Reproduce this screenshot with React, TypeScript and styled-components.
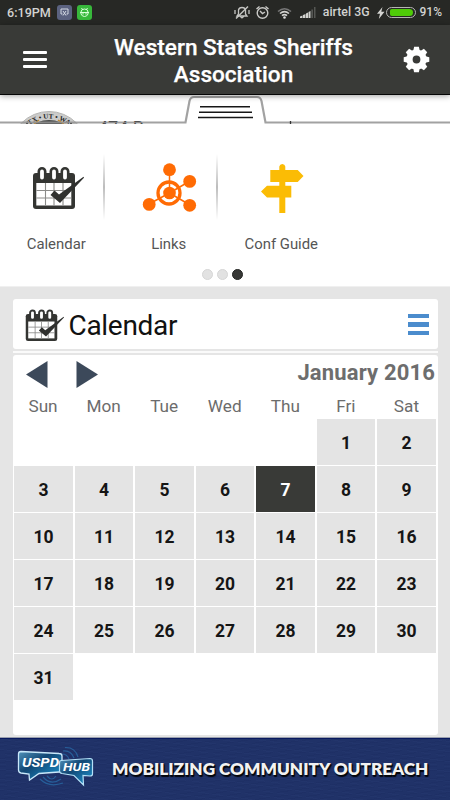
import React from "react";
import styled, { createGlobalStyle } from "styled-components";

const Global = createGlobalStyle`
  * { box-sizing: border-box; }
  body { margin: 0; background: #e5e5e5; font-family: Roboto, "Liberation Sans", sans-serif; }
`;

const Screen = styled.div`
  width: 450px;
  height: 800px;
  display: flex;
  flex-direction: column;
  overflow: hidden;
  background: #e5e5e5;
`;

const StatusBar = styled.div`
  height: 25px;
  flex: none;
  display: flex;
  align-items: center;
  padding: 0 8px 0 7px;
  background: #272825;
  color: #d2d2d0;
`;
const StatusText = styled.span<{ $size?: number; $left?: number }>`
  font-size: ${(p) => p.$size ?? 12}px;
  font-weight: 500;
  line-height: 25px;
  margin-left: ${(p) => p.$left ?? 0}px;
  white-space: nowrap;
`;
const Chip = styled.span<{ $color: string; $left: number }>`
  width: 15px;
  height: 15px;
  border-radius: 3px;
  margin-left: ${(p) => p.$left}px;
  background: ${(p) => p.$color};
  display: flex;
  align-items: center;
  justify-content: center;
`;
const StatusIcon = styled.svg<{ $left?: number }>`
  flex: none;
  margin-left: ${(p) => p.$left ?? 0}px;
`;
const Spacer = styled.div`
  flex: 1;
`;
const Battery = styled.span`
  width: 30px;
  height: 11px;
  margin-left: 1px;
  padding: 1px 2px 1px 3px;
  border: 1px solid #b5b5b2;
  border-radius: 6px;
  display: flex;
`;
const Charge = styled.span`
  width: 25px;
  height: 7px;
  border-radius: 2px 4px 4px 2px;
  background: #4fcb08;
`;

const Header = styled.header`
  height: 70px;
  flex: none;
  position: relative;
  z-index: 2;
  display: flex;
  align-items: center;
  padding: 0 19px 0 23px;
  background: #393a37;
  border-bottom: 1px solid #050505;
  box-shadow: 0 1px 6px rgba(0, 0, 0, 0.38);
`;
const Title = styled.h1`
  margin: 0 auto 0 46.5px;
  padding-top: 4px;
  width: 280px;
  color: #fff;
  font-size: 22.6px;
  font-weight: 500;
  line-height: 26.5px;
  text-align: center;
  -webkit-text-stroke: 0.25px #fff;
`;
const MenuButton = styled.button`
  width: 24px;
  height: 17px;
  padding: 0;
  border: 0;
  background: none;
  display: flex;
  flex-direction: column;
  justify-content: space-between;
`;
const MenuLine = styled.span`
  height: 3px;
  width: 24px;
  border-radius: 1px;
  background: #fff;
`;

const Strip = styled.div`
  height: 29px;
  flex: none;
  position: relative;
  display: flex;
  align-items: flex-start;
  overflow: hidden;
  background: #fff;
  padding-left: 9px;
`;
const Address = styled.span`
  margin: 21px 0 0 9px;
  font-size: 18px;
  line-height: 24px;
  color: #222;
  white-space: nowrap;
`;
const Handle = styled.svg`
  position: absolute;
  left: 0;
  top: 0;
`;

const Drawer = styled.nav`
  height: 163px;
  flex: none;
  background: #fff;
  border-bottom: 1px solid #f0f0f0;
`;
const Shortcuts = styled.div`
  display: grid;
  grid-template-columns: repeat(4, 112.5px);
  height: 143px;
`;
const Shortcut = styled.div<{ $ruled?: boolean }>`
  display: flex;
  flex-direction: column;
  align-items: center;
  padding-top: 37px;
  color: #555;
  font-size: 14.9px;
  line-height: 20px;
  white-space: nowrap;
  background: ${(p) =>
    p.$ruled
      ? "linear-gradient(#fff, #bdbdbd 50%, #fff) 103px 30px / 2px 66px no-repeat"
      : "none"};
`;
const ShortcutIcon = styled.svg`
  width: 60px;
  height: 54px;
  margin-bottom: 19px;
  flex: none;
`;
const Dots = styled.div`
  display: flex;
  justify-content: center;
  gap: 4px;
  padding: 2px 6px 0 0;
`;
const Dot = styled.span<{ $active?: boolean }>`
  width: 11px;
  height: 11px;
  border-radius: 50%;
  background: ${(p) => (p.$active ? "#373836" : "#e2e2e2")};
  border: 1px solid ${(p) => (p.$active ? "#252624" : "#d6d6d6")};
`;

const Content = styled.main`
  height: 450px;
  flex: none;
  padding: 12px 12.5px 0;
`;
const Heading = styled.section`
  height: 50px;
  display: flex;
  align-items: center;
  padding: 0 8.5px 0 9px;
  background: #fff;
  border-radius: 3px;
`;
const HeadingText = styled.h2`
  margin: 4px 0 0 2px;
  flex: 1;
  font-size: 28px;
  font-weight: 400;
  line-height: 32px;
  letter-spacing: -0.3px;
  color: #111;
`;
const HeadingIcon = styled.svg`
  width: 45px;
  height: 40px;
  margin-top: 1px;
  flex: none;
`;
const ListButton = styled.button`
  width: 21px;
  height: 21px;
  margin-top: 1px;
  padding: 0;
  border: 0;
  background: none;
  display: flex;
  flex-direction: column;
  justify-content: space-between;
`;
const ListLine = styled.span`
  width: 21px;
  height: 4.4px;
  background: #4b8ccd;
`;
const Rule = styled.div`
  height: 2px;
  margin: 2px 0;
  background: #fafafa;
`;
const Month = styled.section`
  height: 380px;
  border-radius: 3px;
  background: #fff;
  padding: 0 1.5px;
`;
const MonthBar = styled.div`
  height: 37px;
  display: flex;
  align-items: center;
  padding-left: 12px;
`;
const Arrow = styled.svg<{ $left?: number }>`
  width: 22px;
  height: 27px;
  margin: 1px 0 0 ${(p) => p.$left ?? 0}px;
`;
const MonthName = styled.h3`
  margin: -3px 1px 0 auto;
  font-size: 22px;
  line-height: 27px;
  font-weight: 700;
  letter-spacing: 0.15px;
  color: #6d6d6d;
`;
const Week = styled.div`
  height: 27px;
  display: grid;
  grid-template-columns: repeat(7, 1fr);
  margin-right: -2px;
`;
const Weekday = styled.span`
  text-align: center;
  font-size: 17.2px;
  line-height: 28px;
  padding-right: 2.5px;
  color: #6c6c6c;
`;
const Days = styled.div`
  display: grid;
  grid-template-columns: repeat(7, 1fr);
  grid-auto-rows: 45.5px;
  gap: 1.6px;
`;
const Day = styled.button<{ $selected?: boolean; $first?: boolean }>`
  padding: 2px 0 0;
  border: 0;
  ${(p) => (p.$first ? "grid-column-start: 6;" : "")}
  font: 700 17.5px/20px Roboto, "Liberation Sans", sans-serif;
  background: ${(p) => (p.$selected ? "#393a37" : "#e4e4e4")};
  color: ${(p) => (p.$selected ? "#fff" : "#151515")};
`;

const Banner = styled.footer`
  height: 63px;
  flex: none;
  display: flex;
  align-items: center;
  border-top: 1px solid #9aa0ae;
  background:
    repeating-linear-gradient(172deg, rgba(8, 20, 70, 0.08) 0 1px, transparent 1px 4px),
    repeating-linear-gradient(8deg, rgba(75, 100, 165, 0.06) 0 1px, transparent 1px 5px),
    #203268;
  box-shadow: inset 0 1px 0 #08185e;
  padding-left: 14px;
`;
const Slogan = styled.strong`
  margin: 0 0 1px 18px;
  color: #f2f2f2;
  font-family: Lato, sans-serif;
  font-size: 17.2px;
  font-weight: 800;
  line-height: 24px;
  letter-spacing: -0.02px;
  white-space: nowrap;
  text-shadow: 1px 1px 1px #05070c, 1px 2px 1px #05070c;
`;

const CalendarArt = () => (
  <>
    <path d="M9 14Q9 11 12 11H48Q51 11 51 14V44Q51 47 48 47H12Q9 47 9 44Z" fill="#343532" transform="translate(0 1)" />
    {[18, 30, 41].map((x) => (
      <rect key={x} x={x - 3.2} y="7.2" width="6.4" height="12.5" rx="3.2" fill="#fff" stroke="#343532" strokeWidth="2.6" />
    ))}
    <rect x="12.3" y="22" width="35" height="22.5" fill="#fff" />
    <path d="M21.5 22V44.500M30 22V44.500M39 22V44.500M12.300 29.500H47.500M12.300 37H47.500" stroke="#8b8b89" strokeWidth="1.1" />
    <path d="M26.500 34L30.500 29.500L35 33.500L59.500 15.800L60 16.800L36 42Z" fill="#30312f" />
  </>
);

const LinksArt = () => (
  <g fill="#ff6b04" stroke="#ff6b04">
    <path d="M30.5 32V8M30.5 32L51 20M30.5 32L51 44M30.5 32L10 43" strokeWidth="1.5" />
    <circle cx="30" cy="32" r="11" fill="none" strokeWidth="3.3" />
    <g stroke="none">
      <circle cx="30.5" cy="32" r="6.3" />
      <circle cx="30.5" cy="8.7" r="6.4" />
      <circle cx="50.7" cy="20.4" r="6.4" />
      <circle cx="50.7" cy="44.3" r="6.4" />
      <circle cx="10.2" cy="43.4" r="6.4" />
    </g>
  </g>
);

const SignArt = () => (
  <path
    fill="#fbbc05"
    d="M26.3 9V5.5Q26.8 3 29.3 3T32.3 5.5V9H44.7L50.5 15L44.7 21H32.3V24.7H38.3V36.4H32.3V52H26.3V36.4H14L8 30.5L14 24.7H26.3V21H17.3V9Z"
  />
);

const Gear = () => (
  <svg width="29" height="29" viewBox="1 1 22 22">
    {[0, 45, 90, 135, 180, 225, 270, 315].map((a) => (
      <path key={a} d="M9.400 6L10.200 2.300H13.800L14.600 6Z" fill="#fff" transform={`rotate(${a} 12 12)`} />
    ))}
    <circle cx="12" cy="12" r="5.300" fill="none" stroke="#fff" strokeWidth="4.700" />
  </svg>
);

const Seal = () => (
  <svg width="80" height="29" viewBox="9 95 80 29">
    <circle cx="49" cy="150" r="38.5" fill="#cbcbca" stroke="#b5b5b3" />
    <circle cx="49" cy="150" r="30" fill="#4a4c4a" />
    <path d="M34 124L39 120M64 124L58 120" stroke="#c58a29" strokeWidth="1.5" />
    <path id="seal-arc" d="M17.500 150a31.500 31.500 0 0 1 63 0" fill="none" />
    <text fontFamily="Liberation Serif, serif" fontSize="7" fontWeight="700" fill="#242424" textAnchor="middle">
      <textPath href="#seal-arc" startOffset="50%">TX • UT • WA</textPath>
    </text>
    <circle cx="27" cy="123.500" r="1" fill="#242424" />
    <circle cx="71" cy="123.500" r="1" fill="#242424" />
  </svg>
);

const Logo = () => (
  <svg width="80" height="48" viewBox="0 0 80 48">
    <defs>
      <linearGradient id="bubble" x1="0" y1="0" x2="1" y2="1">
        <stop offset="0" stopColor="#4f91b9" />
        <stop offset="0.4" stopColor="#124774" />
        <stop offset="1" stopColor="#1b98d5" />
      </linearGradient>
    </defs>
    <g fill="none" stroke="#2869a5" strokeWidth="1.2" strokeOpacity="0.8">
      <path d="M48 9Q53 9 55 14M49 6Q57 5 60 13M51 2.500Q61 2 64 12M42 31Q38 37 33 31M47 34Q37 41 29 32M49 38Q35 43 26 34" />
    </g>
    <path d="M7 6.500L45 8.500Q48 8.500 48 11V25Q48 27 45 27L25 28.500L15.500 35L15 29L7 28Q4.500 27.500 4.500 25V9Q4.500 6.500 7 6.500Z" fill="url(#bubble)" stroke="#c9e8fa" strokeWidth="1.300" />
    <path d="M47 15.500L76 13.500Q78.500 13.500 78.500 16V29Q78.500 31 76 31L69 30.500L69.500 40L60 30.500L48 28.500Q45.500 28 45.500 26V18Q45.500 15.500 47 15.500Z" fill="url(#bubble)" stroke="#b4e0f7" strokeWidth="1.200" />
    <g fill="#fff" fontFamily="Roboto, sans-serif" fontWeight="700" fontStyle="italic">
      <text x="8" y="22" fontSize="12.500" textLength="37" lengthAdjust="spacingAndGlyphs">USPD</text>
      <text x="49" y="26" fontSize="10.500" textLength="27" lengthAdjust="spacingAndGlyphs">HUB</text>
    </g>
  </svg>
);

const weekdays = ["Sun", "Mon", "Tue", "Wed", "Thu", "Fri", "Sat"];
const days = Array.from({ length: 31 }, (_, i) => i + 1);

export default function App() {
  return (
    <Screen>
      <Global />
      <StatusBar>
        <StatusText $size={12.6}>6:19PM</StatusText>
        <Chip $color="#5b6280" $left={6}>
          <svg width="9" height="9" viewBox="0 0 9 9" fill="none" stroke="#d5dae5">
            <path d="M2.500 6H1V1H8V6H6.500M3 3L6 7.500M6 3L3 7.500" />
          </svg>
        </Chip>
        <Chip $color="#37b83b" $left={5}>
          <svg width="11" height="11" viewBox="0 0 11 11" fill="none" stroke="#d9ffd8">
            <path d="M2.500 1L3.500 2.500M8.500 1L7.500 2.500M2 5Q2 2 5.500 2T9 5V7Q8 9.500 5.500 9.500T2 7ZM1 5.500H10M4 6V7.500M7 6V7.500" />
          </svg>
        </Chip>
        <Spacer />
        <StatusIcon width="16" height="15" viewBox="0 0 16 15" fill="none" stroke="#c5c5c2" strokeWidth="1.3">
          <path d="M3 11H13L11.500 9V5Q11 2.500 8 2.500T4.500 5V9ZM6.500 11.500Q8 14 9.500 11.500M1 5V9M15 5V9" />
          <path d="M2 13.500L14 1.500" strokeWidth="1.5" />
        </StatusIcon>
        <StatusIcon $left={5} width="15" height="15" viewBox="0 0 14 15" fill="none" stroke="#cacac7" strokeWidth="1.4">
          <circle cx="7" cy="8" r="5.300" />
          <path d="M1 4L4 1.500M13 4L10 1.500M4.500 6L7 8.500L9.500 7" />
        </StatusIcon>
        <StatusIcon $left={7} width="15" height="12" viewBox="0 0 15 12" fill="none" strokeWidth="1.6">
          <path d="M1 4.500Q7.500 -1 14 4.500" stroke="#777" />
          <path d="M3 6.500Q7.500 2.700 12 6.500M5 8.700Q7.500 6.500 10 8.700" stroke="#d2d2cf" />
          <circle cx="7.500" cy="10.500" r="1.300" fill="#ddd" />
        </StatusIcon>
        <StatusIcon $left={8} width="16" height="11" viewBox="0 0 16 11">
          <path d="M0 11V9.500L2.500 8.500V11ZM3 11V8L5.500 7V11ZM6 11V6.500L8 5.500V11ZM8.500 11V5L10.500 4V11Z" fill="#d2d2cf" />
          <path d="M11.300 11V2.500H13V11ZM14 11V0H15.500V11Z" fill="#555653" />
        </StatusIcon>
        <StatusText $left={7} $size={12.3}>airtel 3G</StatusText>
        <StatusIcon $left={7} width="8" height="12" viewBox="0 0 8 12">
          <path d="M5.500 0L0 6.800H3L1.800 12L7.500 4.800H4.300Z" fill="#d5d5d2" />
        </StatusIcon>
        <Battery><Charge /></Battery>
        <StatusText $left={4} $size={12}>91%</StatusText>
      </StatusBar>
      <Header>
        <MenuButton aria-label="Menu"><MenuLine /><MenuLine /><MenuLine /></MenuButton>
        <Title>Western States Sheriffs<br />Association</Title>
        <Gear />
      </Header>
      <Strip>
        <Seal />
        <Address>474 B</Address>
        <Handle width="450" height="29" viewBox="0 0 450 29">
          <path d="M185.500 27.500L189.500 6Q190.500 2 194 2H257Q260.500 2 261.500 6L265.500 27.500Z" fill="#fff" />
          <path d="M0 27.500H185.500L189.500 6Q190.500 2 194 2H257Q260.500 2 261.500 6L265.500 27.500H450" fill="none" stroke="#929292" strokeWidth="2.2" strokeOpacity="0.85" />
          <path d="M200 11.700H250M199 17.200H252M198 22.500H253" stroke="#161616" strokeWidth="1.500" />
          <path d="M290.500 26V29" stroke="#333" strokeWidth="1.300" />
        </Handle>
      </Strip>
      <Drawer>
        <Shortcuts>
          <Shortcut $ruled><ShortcutIcon viewBox="2 0 60 54"><CalendarArt /></ShortcutIcon>Calendar</Shortcut>
          <Shortcut $ruled><ShortcutIcon viewBox="0 0 60 54"><LinksArt /></ShortcutIcon>Links</Shortcut>
          <Shortcut><ShortcutIcon viewBox="-2 0 60 54"><SignArt /></ShortcutIcon>Conf Guide</Shortcut>
        </Shortcuts>
        <Dots><Dot /><Dot /><Dot $active /></Dots>
      </Drawer>
      <Content>
        <Heading>
          <HeadingIcon viewBox="4 0 60 53.300"><CalendarArt /></HeadingIcon>
          <HeadingText>Calendar</HeadingText>
          <ListButton aria-label="List"><ListLine /><ListLine /><ListLine /></ListButton>
        </Heading>
        <Rule />
        <Month>
          <MonthBar>
            <Arrow viewBox="0 0 22 27"><path d="M0 13.500L21.500 0V27Z" fill="#3c495a" /></Arrow>
            <Arrow $left={28} viewBox="0 0 22 27"><path d="M22 13.500L0.500 0V27Z" fill="#3c495a" /></Arrow>
            <MonthName>January 2016</MonthName>
          </MonthBar>
          <Week>{weekdays.map((d) => <Weekday key={d}>{d}</Weekday>)}</Week>
          <Days>
            {days.map((d) => <Day key={d} $first={d === 1} $selected={d === 7}>{d}</Day>)}
          </Days>
        </Month>
      </Content>
      <Banner>
        <Logo />
        <Slogan>MOBILIZING COMMUNITY OUTREACH</Slogan>
      </Banner>
    </Screen>
  );
}
